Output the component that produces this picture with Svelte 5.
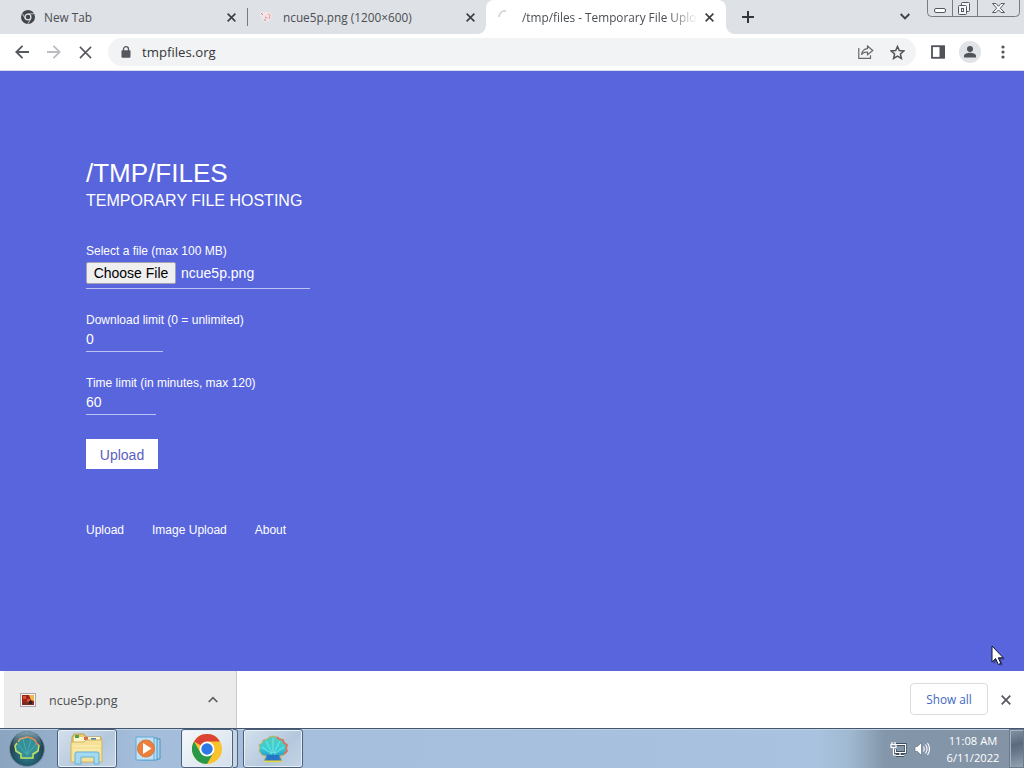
<script lang="ts">
    let url = 'tmpfiles.org';
    let fileName = 'ncue5p.png';
    let downloadLimit = '0';
    let timeLimit = '60';
    let links = ['Upload', 'Image Upload', 'About'];
</script>

<svelte:head>
    <title>/tmp/files - Temporary File Upload</title>
</svelte:head>

{#snippet cross(size, color, width)}
    <svg width={size} height={size} viewBox="0 0 10 10" fill="none" stroke={color} stroke-width={width}>
        <path d="M.7.7l8.6 8.6M9.3.7L.7 9.3" />
    </svg>
{/snippet}

<div class="screen">
    <header class="tabs">
        <div class="tab first">
            <svg class="favicon" width="14" height="14" viewBox="0 0 14 14">
                <circle cx="7" cy="7" r="7" fill="#41464b" />
                <circle cx="7" cy="7" r="2.9" fill="#41464b" stroke="#dee1e6" stroke-width="1.3" />
                <path d="M7 3.8h6M4.2 8.7L1.3 3.6M9.8 8.6L6.9 13.8" stroke="#dee1e6" stroke-width=".8" />
            </svg>
            <span class="name new">New Tab</span>
            {@render cross(9, '#3c4043', 1.8)}
        </div>
        <div class="tab second">
            <svg class="favicon" width="14" height="14" viewBox="0 0 14 14">
                <path d="M1 2h10l2 3-2 6-6 1-3-4z" fill="#f3e3e6" />
                <path d="M2 3l2 2M6 7l2 1M5 10h2" stroke="#b58b92" />
                <path d="M9 4l2 1-1 4" fill="none" stroke="#ed9b9e" />
            </svg>
            <span class="name png">ncue5p.png (1200×600)</span>
            {@render cross(9, '#3c4043', 1.8)}
        </div>
        <div class="tab active">
            <svg class="favicon" width="14" height="14" viewBox="0 0 14 14">
                <path d="M1 7a6 6 0 0 1 7-6" fill="none" stroke="#d3d5d9" stroke-width="1.8" />
            </svg>
            <span class="name long">/tmp/files - Temporary File Upload</span>
            {@render cross(9, '#3c4043', 1.8)}
        </div>
        <svg class="plus" width="12" height="12" viewBox="0 0 12 12" stroke="#33363a" stroke-width="2">
            <path d="M6 0v12M0 6h12" />
        </svg>
        <svg class="chevron" width="10" height="7" viewBox="0 0 10 7" fill="none" stroke="#3c4043" stroke-width="1.9">
            <path d="M.7 1L5 5.3 9.3 1" />
        </svg>
        <svg class="controls" width="93" height="17" viewBox="0 0 93 17" fill="none">
            <path d="M.5 0v12.500q0 4 4 4h84q4 0 4-4V0M25.500 0v16M50.500 0v16" stroke="#777c83" />
            <rect x="7.500" y="8.500" width="11" height="4" rx="1.500" fill="#fff" stroke="#555a60" />
            <rect x="34.500" y="2.500" width="8" height="9" rx="1" fill="#f5f6f7" stroke="#555a60" />
            <rect x="31.500" y="5.500" width="8" height="9" rx="1" fill="#f5f6f7" stroke="#555a60" />
            <rect x="34.500" y="8.500" width="2" height="3" stroke="#555a60" />
            <path d="M65.500 3.500h3.500l2.500 2.800L74 3.500h3.500l-4.200 4.700 4.200 4.300H74l-2.500-2.600-2.500 2.600h-3.500l4.200-4.300z" fill="#fafafa" stroke="#555a60" />
        </svg>
    </header>

    <nav class="toolbar">
        <svg class="back" width="14" height="14" viewBox="0 0 14 14" fill="none" stroke="#55585d" stroke-width="1.800">
            <path d="M14 7H1.500M7.500.8L1.300 7l6.200 6.200" />
        </svg>
        <svg class="forward" width="14" height="14" viewBox="0 0 14 14" fill="none" stroke="#bbbdc0" stroke-width="1.800">
            <path d="M0 7h12.500M6.500.8L12.700 7l-6.200 6.200" />
        </svg>
        {@render cross(13, '#55585d', 1.2)}
        <div class="address">
            <svg width="10" height="12" viewBox="0 0 10 12">
                <rect x=".5" y="4.200" width="9" height="7.500" rx="1" fill="#55585d" />
                <path d="M2.500 5V3a2.500 2.300 0 0 1 5 0v2" fill="none" stroke="#55585d" stroke-width="1.300" />
            </svg>
            <span class="url">{url}</span>
            <svg class="share" width="16" height="14" viewBox="0 0 16 14" fill="none" stroke="#66696e" stroke-width="1.200">
                <path d="M.8 3v10.300h11.700v-3" />
                <path d="M9.500 1l5.300 4.500-5.300 4.300V7.200C6.500 7 4.500 8 3.500 9.800 4 6.500 6 4 9.500 3.700z" />
            </svg>
            <svg class="star" width="15" height="15" viewBox="0 0 15 15" fill="none" stroke="#505459" stroke-width="1.500">
                <path d="M7.500 1.500l1.800 4.100 4.500.4-3.400 3 1 4.400-3.900-2.300-3.900 2.300 1-4.400-3.400-3 4.500-.4z" />
            </svg>
        </div>
        <svg class="panel" width="14" height="14" viewBox="0 0 14 14">
            <rect x="1" y="1.200" width="12" height="11.600" fill="#fff" stroke="#505357" stroke-width="1.800" />
            <path d="M8.500 1H14v12H8.500z" fill="#505357" />
        </svg>
        <svg class="avatar" width="22" height="22" viewBox="0 0 22 22">
            <circle cx="11" cy="11" r="11" fill="#e0e3e7" />
            <circle cx="11" cy="8" r="3" fill="#505357" />
            <path d="M5 16.500v-1.800c0-2 3.500-3 6-3s6 1 6 3v1.800z" fill="#505357" />
        </svg>
        <svg class="dots" width="4" height="14" viewBox="0 0 4 14" fill="#505357">
            <circle cx="2" cy="2" r="1.600" /><circle cx="2" cy="7" r="1.600" /><circle cx="2" cy="12" r="1.600" />
        </svg>
    </nav>

    <main>
        <h1>/TMP/FILES</h1>
        <h2>TEMPORARY FILE HOSTING</h2>
        <form>
            <div class="label">Select a file (max 100 MB)</div>
            <div class="field file">
                <span class="choose">Choose File</span>
                <span>{fileName}</span>
            </div>
            <div class="label">Download limit (0 = unlimited)</div>
            <div class="field downloads">{downloadLimit}</div>
            <div class="label">Time limit (in minutes, max 120)</div>
            <div class="field time">{timeLimit}</div>
            <button type="button">Upload</button>
        </form>
        <div class="links">
            {#each links as link}
                <span>{link}</span>
            {/each}
        </div>
    </main>

    <section class="downloads-bar">
        <div class="download">
            <svg width="16" height="14" viewBox="0 0 16 14">
                <rect x=".5" y=".5" width="15" height="13" fill="#f8f3ec" stroke="#aaa5ae" />
                <path d="M2 2h12v10H2z" fill="#9d241d" />
                <path d="M3 3h3v3H3zM7 6h3v3H7z" fill="#d6552e" />
                <path d="M9 2h5v6l-3-1z" fill="#edb94d" />
                <path d="M2 9l4 1 4-2 4 1v3H2z" fill="#7c2920" />
                <path d="M9 8h3v3H9z" fill="#29231f" />
            </svg>
            <span class="download-name">{fileName}</span>
            <svg width="10" height="7" viewBox="0 0 10 7" fill="none" stroke="#5c5f63" stroke-width="1.700">
                <path d="M.7 6L5 1.700 9.300 6" />
            </svg>
        </div>
        <span class="show-all">Show all</span>
        {@render cross(10, '#55585d', 1.7)}
    </section>

    <footer class="taskbar">
        <svg class="start" width="38" height="38" viewBox="0 0 38 38">
            <defs>
                <radialGradient id="orb" cx=".5" cy=".65">
                    <stop offset="0" stop-color="#2c8792" /><stop offset=".7" stop-color="#235668" /><stop offset="1" stop-color="#244052" />
                </radialGradient>
                <linearGradient id="shine" x2="0" y2="1">
                    <stop stop-color="#9cbcc6" stop-opacity=".8" /><stop offset="1" stop-color="#5d93a0" stop-opacity=".2" />
                </linearGradient>
            </defs>
            <circle cx="19" cy="19" r="17.500" fill="url(#orb)" stroke="#7593a5" />
            <path d="M4 16Q6 2 19 2t15 14Q19 11 4 16" fill="url(#shine)" />
            <path d="M14 25l-4-1-3-3 1-3-1-3 3-2 1-3 4-1 4-2 4 2 4 1 1 3 3 2-1 3 1 3-3 3-4 1 1 4H13z" fill="#348f96" />
            <path d="M19 25L10 14M19 25L15 9M19 25l4-16M19 25l9-11" stroke="#4aabb1" />
            <path d="M10 12l2-3 4-1 3-1" fill="none" stroke="#d8a467" stroke-width="1.600" />
            <path d="M19 7l4 1 4 2 2 4 2 1" fill="none" stroke="#e08a5c" stroke-width="1.600" />
            <path d="M9 13l-2 3 1 5 5 3v4h12v-4l5-3 1-6" fill="none" stroke="#c4de60" stroke-width="1.600" />
        </svg>
        <div class="task folder">
            <svg width="34" height="32" viewBox="0 0 34 32">
                <path d="M2 4l2-3h10l2 3h15v24H2z" fill="#e9cc6e" stroke="#bd9d4a" />
                <path d="M4 4h26v6H4z" fill="#fff7cb" />
                <path d="M5 2h4v3H5z" fill="#4fa153" /><path d="M14 4h4v3h-4z" fill="#d5684f" /><path d="M21 5h5v2h-5z" fill="#4988c5" />
                <path d="M1 9h13l2-2h16v22H1z" fill="#f5e197" stroke="#d0b461" />
                <path d="M3 13h27M3 17h27" stroke="#fff3ba" />
                <path d="M5 31V21q0-2 2-2h20q2 0 2 2v10h-5v-7H11v7z" fill="#a4d9f2" stroke="#65b0d6" />
            </svg>
        </div>
        <svg class="player" width="28" height="26" viewBox="0 0 28 26">
            <path d="M8 3h17v20H8z" fill="#a9d3ee" stroke="#4d91c4" />
            <path d="M5 2h17v22H5z" fill="#b9dff5" stroke="#4b96cb" />
            <path d="M1 1h18v23H1z" fill="#c2e0f3" stroke="#62a9d6" />
            <circle cx="11" cy="12.500" r="8.500" fill="#ee7f3a" stroke="#cc7846" />
            <path d="M8 7l8.500 5.500L8 18z" fill="#fff" />
        </svg>
        <div class="task chrome">
            <svg width="30" height="30" viewBox="0 0 30 30">
                <circle cx="15" cy="15" r="15" fill="#fac32d" />
                <path d="M15 15L2 7.500a15 15 0 0 1 26 0H15z" fill="#db4335" />
                <path d="M15 15l6.500 3.800L15 30A15 15 0 0 1 2 7.500l6.500 11.300z" fill="#299849" />
                <circle cx="15" cy="15" r="7.500" fill="#fff" /><circle cx="15" cy="15" r="5.700" fill="#2d78e5" />
            </svg>
        </div>
        <div class="stack"></div>
        <div class="task shell">
            <svg width="30" height="28" viewBox="0 0 30 28">
                <defs>
                    <linearGradient id="shell" x2="0" y2="1">
                        <stop stop-color="#5cc9b4" /><stop offset=".5" stop-color="#35cfd8" /><stop offset="1" stop-color="#2779c2" />
                    </linearGradient>
                </defs>
                <path d="M8 21l-4-1-3-4 1-3-1-3 3-2 1-3 4-1 2-2 4-1 4 1 2 2 4 1 1 3 3 2-1 3 1 3-3 4-4 1 2 5H6z" fill="url(#shell)" stroke="#cbb066" />
                <path d="M14 19L4 12M14 18L8 6M15 18V3M16 18l6-12M16 19l10-7" stroke="#69e0df" stroke-width="1.300" />
                <path d="M19 2l2 2 4 1 1 3 3 2-1 3 1 3-3 3" fill="none" stroke="#d5745a" stroke-width="1.800" />
                <path d="M9 20h12v5H9z" fill="#2776c4" /><path d="M6 26.500h18" stroke="#e6d545" stroke-width="1.500" />
            </svg>
        </div>
        <div class="tray">
            <svg width="17" height="16" viewBox="0 0 17 16" fill="none">
                <path d="M6 3.500h9.500v8H5.500V8M10 12v2.500M6 14.500h8" stroke="#2d3945" stroke-width="2.400" />
                <path d="M6 3.500h9.500v8H5.500V8M10 12v2.500M6 14.500h8M2 1v3M5 1v3M1 3.500h5v3H1zM3.500 7v7H6" stroke="#fff" stroke-width="1.200" />
            </svg>
            <svg width="16" height="16" viewBox="0 0 16 16" fill="none">
                <path d="M1 5.500h2.500L7.500 1.500v13l-4-4H1z" fill="#fff" stroke="#586776" stroke-width=".6" />
                <path d="M9.500 5.500q1.500 2.500 0 5M11.500 3.500q3 4.500 0 9M13.500 2q4 6 0 12" stroke="#fff" stroke-width="1.100" />
            </svg>
            <div class="clock">
                <span>11:08 AM</span>
                <span>6/11/2022</span>
            </div>
        </div>
        <div class="peek"></div>
    </footer>

    <svg class="cursor" width="14" height="22" viewBox="0 0 14 22">
        <path d="M2.500 3v16l3.500-3 3 5 3-1.500-2.500-5H14z" fill="#1d234b" opacity=".5" />
        <path d="M1 1v16l3.600-3.400L7.300 19.500l2.500-1.200-2.500-5.500h5z" fill="#fff" stroke="#11162e" />
    </svg>
</div>

<style>
    :global(body) {
        margin: 0;
    }

    .screen {
        position: relative;
        display: flex;
        flex-direction: column;
        width: 1024px;
        height: 768px;
        overflow: hidden;
        background: #fff;
        font-family: "Open Sans", "Noto Sans", sans-serif;
        font-size: 12px;
        color: #4b4e52;
    }

    svg {
        display: block;
        flex: none;
    }

    .tabs {
        display: flex;
        height: 34px;
        background: #dee1e6;
    }

    .tab {
        display: flex;
        align-items: center;
        box-sizing: border-box;
        height: 34px;
        padding-left: 21px;
    }

    .first {
        width: 248px;
        background: linear-gradient(#777b80, #777b80) right 8px / 1px 18px no-repeat;
    }

    .second {
        width: 238px;
        padding-left: 11px;
    }

    .active {
        position: relative;
        width: 240px;
        padding-left: 12px;
        border-radius: 8px 8px 0 0;
        background: #fff;
    }

    .active::before, .active::after {
        content: "";
        position: absolute;
        bottom: 0;
        left: -8px;
        width: 8px;
        height: 8px;
        background: radial-gradient(circle at 0 0, transparent 7.5px, #fff 8px);
    }

    .active::after {
        left: auto;
        right: -8px;
        background: radial-gradient(circle at 100% 0, transparent 7.5px, #fff 8px);
    }

    .name {
        box-sizing: border-box;
        overflow: hidden;
        white-space: nowrap;
        line-height: 18px;
        font-size: 11.8px;
        flex: none;
    }

    .new {
        width: 192px;
        padding-left: 9px;
    }

    .png {
        width: 193px;
        padding-left: 10px;
    }

    .long {
        width: 174px;
        margin: 0 9px 0 10px;
        -webkit-mask-image: linear-gradient(90deg, #000 146px, transparent 176px);
        mask-image: linear-gradient(90deg, #000 146px, transparent 176px);
    }

    .plus {
        margin: 11px 0 0 16px;
    }

    .chevron {
        margin: 13px 0 0 146px;
    }

    .controls {
        margin-left: 17px;
    }

    .toolbar {
        display: flex;
        align-items: center;
        box-sizing: border-box;
        height: 37px;
        padding-left: 15px;
        border-bottom: 1px solid #d8d9ee;
    }

    .forward {
        margin: 0 18px;
    }

    .address {
        display: flex;
        align-items: center;
        box-sizing: border-box;
        width: 808px;
        height: 28px;
        margin-left: 16px;
        padding-left: 13px;
        border-radius: 14px;
        background: #f1f3f4;
    }

    .url {
        width: 716px;
        margin-left: 11px;
        font-size: 13.2px;
        line-height: 20px;
        color: #35373b;
    }

    .share {
        margin-right: 16px;
    }

    .panel {
        margin-left: 15px;
    }

    .avatar {
        margin: 0 20px 0 14px;
    }

    main {
        box-sizing: border-box;
        height: 600px;
        padding: 87px 86px 0;
        background: #5865dd;
        color: #fff;
        font: 14px/16px "Liberation Sans", Arial, sans-serif;
    }

    h1 {
        margin: 0;
        font-size: 26px;
        font-weight: 400;
        line-height: 30px;
    }

    h2 {
        margin: 3px 0 32px;
        font-size: 16px;
        font-weight: 400;
        line-height: 20px;
    }

    .label {
        font-size: 12px;
    }

    .field {
        padding: 3px 0 4px;
        margin-bottom: 23px;
        border-bottom: 1px solid #bcc2f2;
    }

    .file {
        display: flex;
        align-items: center;
        gap: 5px;
        width: 224px;
    }

    .choose {
        box-sizing: border-box;
        width: 90px;
        height: 22px;
        border: 1px solid #a3a3b4;
        border-radius: 2px;
        background: #efefef;
        color: #000;
        line-height: 20px;
        text-align: center;
    }

    .downloads {
        width: 77px;
    }

    .time {
        width: 70px;
    }

    button {
        display: block;
        width: 72px;
        height: 30px;
        margin-top: 24px;
        padding: 2px 0 0;
        border: 0;
        background: #fff;
        color: #5b60bd;
        font: inherit;
    }

    .links {
        display: flex;
        gap: 28px;
        margin-top: 53px;
        font-size: 12px;
    }

    .downloads-bar {
        display: flex;
        align-items: center;
        height: 57px;
        background: #fff;
    }

    .download {
        display: flex;
        align-items: center;
        box-sizing: border-box;
        width: 233px;
        height: 57px;
        margin-left: 4px;
        padding-left: 16px;
        border-right: 1px solid #c9cacb;
        background: #ebebeb;
    }

    .download-name {
        width: 159px;
        margin-left: 13px;
        padding-top: 2px;
        font-size: 12.5px;
    }

    .show-all {
        box-sizing: border-box;
        width: 78px;
        height: 32px;
        margin: 0 13px 2px 673px;
        border: 1px solid #dadce0;
        border-radius: 4px;
        color: #4168bf;
        font-weight: 500;
        font-size: 11.8px;
        line-height: 30px;
        text-align: center;
    }

    .taskbar {
        display: flex;
        align-items: center;
        box-sizing: border-box;
        height: 40px;
        border-top: 1px solid #43566d;
        background: linear-gradient(90deg, #8ba4bf, #a4bddb 140px, #a8c2df 820px, #a0b9d1 850px, #8396aa 885px, #8493a5);
        box-shadow: inset 0 1px #c1d2e4;
    }

    .start {
        margin-left: 8px;
    }

    .task {
        display: flex;
        align-items: center;
        justify-content: center;
        box-sizing: border-box;
        width: 60px;
        height: 39px;
        border: 1px solid #4c6079;
        border-radius: 3px;
        background: linear-gradient(135deg, #d4e0ec, #b4c8dd 60%, #c3d4e5);
        box-shadow: inset 0 0 0 1px #e7f0f8;
    }

    .folder {
        margin-left: 11px;
    }

    .player {
        margin: 0 18px;
    }

    .chrome {
        width: 52px;
        background: linear-gradient(135deg, #f5f8fb, #d3dfeb);
    }

    .stack {
        width: 4px;
        height: 37px;
        border: 1px solid #52657b;
        border-left: 0;
        border-radius: 0 3px 3px 0;
        background: #c5d5e6;
    }

    .shell {
        margin-left: 5px;
    }

    .tray {
        display: flex;
        align-items: center;
        gap: 7px;
        margin-left: 587px;
    }

    .clock {
        display: flex;
        flex-direction: column;
        align-items: center;
        width: 54px;
        margin-left: 9px;
        color: #fff;
        font-size: 11.2px;
        line-height: 17px;
        white-space: nowrap;
    }

    .peek {
        box-sizing: border-box;
        width: 15px;
        height: 39px;
        margin-left: auto;
        border: 1px solid #6b7b8d;
        background: linear-gradient(165deg, #8494a5, #5b6b7d 40%, #6a7b8e 60%, #93a3b3);
        box-shadow: inset 1px 1px #a8b4c2;
    }

    .cursor {
        position: absolute;
        left: 991px;
        top: 645px;
    }
</style>
